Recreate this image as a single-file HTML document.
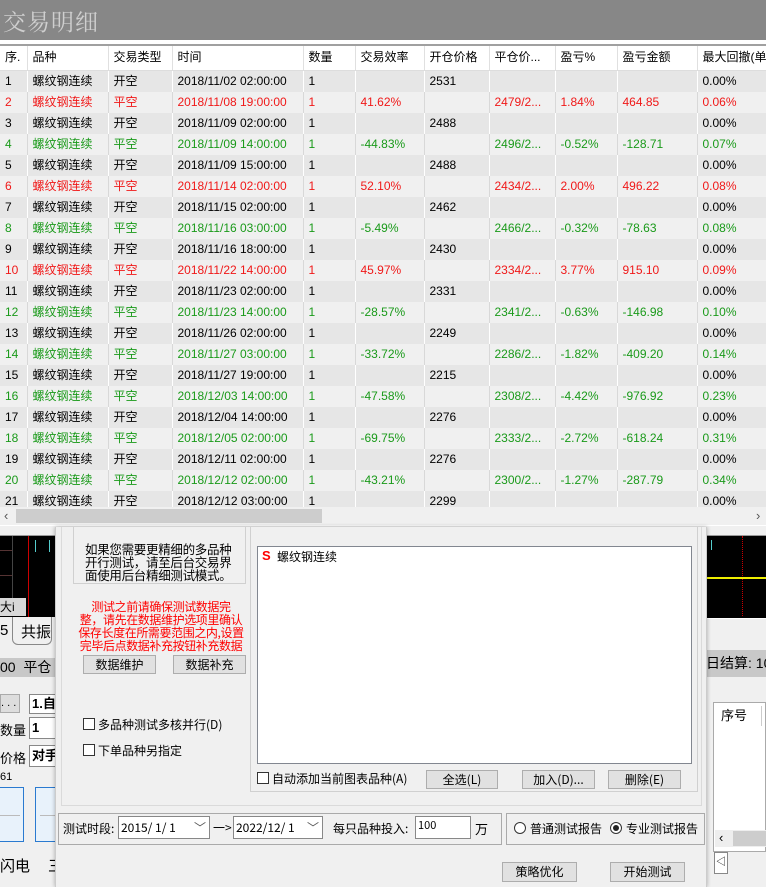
<!DOCTYPE html>
<html><head><meta charset="utf-8"><style>
*{margin:0;padding:0;box-sizing:border-box}
body{width:766px;height:887px;overflow:hidden;position:relative;background:#f0f0f0;font-family:"Liberation Sans","Noto Sans CJK SC",sans-serif;font-size:12px;color:#000}
.a{position:absolute}
#title{left:0;top:0;width:766px;height:40px;background:#878787}
#title span{position:absolute;left:3px;top:4px;font-size:23px;color:#cfcfcf;font-family:"Liberation Serif","Noto Serif CJK SC",serif;letter-spacing:1px}
table{border-collapse:collapse;table-layout:fixed;position:absolute;left:0;top:46px;width:766px}
td{height:21px;padding:0 0 0 5px;white-space:nowrap;overflow:hidden;border-right:1px solid #d8d8d8;font-size:12px;line-height:21px}
tr.h td{height:24px;background:#fff;border-right:1px solid #e0e0e0;border-bottom:1px solid #ddd}
tr.o td{background:#e6e6e6;border-right:1px solid #fff}
tr.r td{color:#f01818}
tr.g td{color:#1a9a1a}
.btn{position:absolute;background:#e1e1e1;border:1px solid #adadad;text-align:center;font-size:12px;line-height:17px}
.cb{position:absolute;width:12px;height:12px;border:1px solid #333;background:#fff}
.dlg{font-family:"WenQuanYi Zen Hei","Noto Sans CJK SC",sans-serif}
.nw{white-space:nowrap}
</style></head><body>
<div id="title" class="a"><span>交易明细</span></div>
<div class="a" style="left:0;top:40px;width:766px;height:6px;background:#fff;border-bottom:2px solid #a0a0a0"></div>
<table>
<colgroup><col style="width:27px"><col style="width:81px"><col style="width:64px"><col style="width:131px"><col style="width:52px"><col style="width:69px"><col style="width:65px"><col style="width:66px"><col style="width:62px"><col style="width:80px"><col style="width:69px"></colgroup>
<tr class="h"><td>序.</td><td>品种</td><td>交易类型</td><td>时间</td><td>数量</td><td>交易效率</td><td>开仓价格</td><td>平仓价...</td><td>盈亏%</td><td>盈亏金额</td><td>最大回撤(单</td></tr>
<tr class="o"><td>1</td><td>螺纹钢连续</td><td>开空</td><td>2018/11/02 02:00:00</td><td>1</td><td></td><td>2531</td><td></td><td></td><td></td><td>0.00%</td></tr>
<tr class="r"><td>2</td><td>螺纹钢连续</td><td>平空</td><td>2018/11/08 19:00:00</td><td>1</td><td>41.62%</td><td></td><td>2479/2...</td><td>1.84%</td><td>464.85</td><td>0.06%</td></tr>
<tr class="o"><td>3</td><td>螺纹钢连续</td><td>开空</td><td>2018/11/09 02:00:00</td><td>1</td><td></td><td>2488</td><td></td><td></td><td></td><td>0.00%</td></tr>
<tr class="g"><td>4</td><td>螺纹钢连续</td><td>平空</td><td>2018/11/09 14:00:00</td><td>1</td><td>-44.83%</td><td></td><td>2496/2...</td><td>-0.52%</td><td>-128.71</td><td>0.07%</td></tr>
<tr class="o"><td>5</td><td>螺纹钢连续</td><td>开空</td><td>2018/11/09 15:00:00</td><td>1</td><td></td><td>2488</td><td></td><td></td><td></td><td>0.00%</td></tr>
<tr class="r"><td>6</td><td>螺纹钢连续</td><td>平空</td><td>2018/11/14 02:00:00</td><td>1</td><td>52.10%</td><td></td><td>2434/2...</td><td>2.00%</td><td>496.22</td><td>0.08%</td></tr>
<tr class="o"><td>7</td><td>螺纹钢连续</td><td>开空</td><td>2018/11/15 02:00:00</td><td>1</td><td></td><td>2462</td><td></td><td></td><td></td><td>0.00%</td></tr>
<tr class="g"><td>8</td><td>螺纹钢连续</td><td>平空</td><td>2018/11/16 03:00:00</td><td>1</td><td>-5.49%</td><td></td><td>2466/2...</td><td>-0.32%</td><td>-78.63</td><td>0.08%</td></tr>
<tr class="o"><td>9</td><td>螺纹钢连续</td><td>开空</td><td>2018/11/16 18:00:00</td><td>1</td><td></td><td>2430</td><td></td><td></td><td></td><td>0.00%</td></tr>
<tr class="r"><td>10</td><td>螺纹钢连续</td><td>平空</td><td>2018/11/22 14:00:00</td><td>1</td><td>45.97%</td><td></td><td>2334/2...</td><td>3.77%</td><td>915.10</td><td>0.09%</td></tr>
<tr class="o"><td>11</td><td>螺纹钢连续</td><td>开空</td><td>2018/11/23 02:00:00</td><td>1</td><td></td><td>2331</td><td></td><td></td><td></td><td>0.00%</td></tr>
<tr class="g"><td>12</td><td>螺纹钢连续</td><td>平空</td><td>2018/11/23 14:00:00</td><td>1</td><td>-28.57%</td><td></td><td>2341/2...</td><td>-0.63%</td><td>-146.98</td><td>0.10%</td></tr>
<tr class="o"><td>13</td><td>螺纹钢连续</td><td>开空</td><td>2018/11/26 02:00:00</td><td>1</td><td></td><td>2249</td><td></td><td></td><td></td><td>0.00%</td></tr>
<tr class="g"><td>14</td><td>螺纹钢连续</td><td>平空</td><td>2018/11/27 03:00:00</td><td>1</td><td>-33.72%</td><td></td><td>2286/2...</td><td>-1.82%</td><td>-409.20</td><td>0.14%</td></tr>
<tr class="o"><td>15</td><td>螺纹钢连续</td><td>开空</td><td>2018/11/27 19:00:00</td><td>1</td><td></td><td>2215</td><td></td><td></td><td></td><td>0.00%</td></tr>
<tr class="g"><td>16</td><td>螺纹钢连续</td><td>平空</td><td>2018/12/03 14:00:00</td><td>1</td><td>-47.58%</td><td></td><td>2308/2...</td><td>-4.42%</td><td>-976.92</td><td>0.23%</td></tr>
<tr class="o"><td>17</td><td>螺纹钢连续</td><td>开空</td><td>2018/12/04 14:00:00</td><td>1</td><td></td><td>2276</td><td></td><td></td><td></td><td>0.00%</td></tr>
<tr class="g"><td>18</td><td>螺纹钢连续</td><td>平空</td><td>2018/12/05 02:00:00</td><td>1</td><td>-69.75%</td><td></td><td>2333/2...</td><td>-2.72%</td><td>-618.24</td><td>0.31%</td></tr>
<tr class="o"><td>19</td><td>螺纹钢连续</td><td>开空</td><td>2018/12/11 02:00:00</td><td>1</td><td></td><td>2276</td><td></td><td></td><td></td><td>0.00%</td></tr>
<tr class="g"><td>20</td><td>螺纹钢连续</td><td>平空</td><td>2018/12/12 02:00:00</td><td>1</td><td>-43.21%</td><td></td><td>2300/2...</td><td>-1.27%</td><td>-287.79</td><td>0.34%</td></tr>
<tr class="o"><td>21</td><td>螺纹钢连续</td><td>开空</td><td>2018/12/12 03:00:00</td><td>1</td><td></td><td>2299</td><td></td><td></td><td></td><td>0.00%</td></tr>
</table>
<div class="a" style="left:0;top:507px;width:766px;height:19px;background:#f0f0f0;border-bottom:1px solid #fff"></div>
<div class="a" style="left:4px;top:508px;font-size:13px;color:#555">&lsaquo;</div>
<div class="a" style="left:16px;top:509px;width:306px;height:14px;background:#cdcdcd"></div>
<div class="a" style="left:756px;top:508px;font-size:13px;color:#555">&rsaquo;</div>
<div class="a" style="left:0;top:526px;width:766px;height:10px;background:#f0f0f0;border-bottom:1px solid #999"></div>

<div class="a" style="left:0;top:536px;width:55px;height:81px;background:#000"></div>
<div class="a" style="left:0;top:550px;width:12px;height:1px;background:#553333"></div>
<div class="a" style="left:0;top:575px;width:12px;height:1px;background:#553333"></div>
<div class="a" style="left:12px;top:536px;width:1px;height:62px;background:#444"></div>
<div class="a" style="left:28px;top:536px;width:1px;height:81px;background:#c00"></div>
<div class="a" style="left:35px;top:540px;width:1px;height:12px;background:#5cc"></div>
<div class="a" style="left:49px;top:540px;width:1px;height:12px;background:#5cc"></div>
<div class="a" style="left:0;top:598px;width:26px;height:18px;background:#d8d8d8;font-size:12px;line-height:18px">大i</div>
<div class="a" style="left:0;top:617px;width:55px;height:28px;background:#f0f0f0;font-size:15px"><span style="position:absolute;left:0;top:5px">5</span><span style="position:absolute;left:12px;top:0;width:40px;height:28px;border:1px solid #888;border-top:none;border-radius:0 0 6px 6px;padding:4px 0 0 8px">共振</span></div>
<div class="a nw" style="left:0;top:658px;width:55px;height:19px;background:#c8c8c8;font-size:14px;line-height:19px;overflow:hidden">00 &nbsp;平仓</div>
<div class="a" style="left:0;top:694px;width:20px;height:19px;background:#ddd;border:1px solid #aaa;font-size:11px;line-height:17px">. . .</div>
<div class="a" style="left:29px;top:694px;width:30px;height:20px;background:#fff;border:1px solid #888;font-size:13px;font-weight:bold;padding-left:2px;line-height:18px">1.自</div>
<div class="a" style="left:0;top:720px;font-size:13px">数量</div>
<div class="a" style="left:29px;top:717px;width:30px;height:22px;background:#fff;border:1px solid #888;font-size:13px;font-weight:bold;padding-left:2px;line-height:20px">1</div>
<div class="a" style="left:0;top:748px;font-size:13px">价格</div>
<div class="a" style="left:29px;top:745px;width:30px;height:22px;background:#fff;border:1px solid #888;font-size:13px;font-weight:bold;padding-left:2px;line-height:20px">对手</div>
<div class="a" style="left:0;top:771px;font-size:11px">61</div>
<div class="a" style="left:0;top:787px;width:24px;height:55px;background:#e8f2fb;border:1px solid #2a7ad0;border-left:none"></div>
<div class="a" style="left:0;top:815px;width:20px;height:1px;background:#bbb"></div>
<div class="a" style="left:35px;top:787px;width:24px;height:55px;background:#e8f2fb;border:1px solid #2a7ad0"></div>
<div class="a" style="left:40px;top:815px;width:19px;height:1px;background:#bbb"></div>
<div class="a" style="left:0;top:852px;width:55px;height:27px;font-size:15px"><span style="position:absolute;left:0;top:3px">闪电</span><span style="position:absolute;left:48px;top:3px">三</span></div>

<div class="a" style="left:707px;top:536px;width:59px;height:83px;background:#000;border-bottom:1px solid #fff"></div>
<div class="a" style="left:742px;top:536px;width:1px;height:80px;border-left:1px dotted #c00"></div>
<div class="a" style="left:707px;top:577px;width:59px;height:2px;background:#ee0"></div>
<div class="a" style="left:711px;top:540px;width:1px;height:10px;background:#5cc"></div>
<div class="a nw" style="left:706px;top:650px;width:60px;height:27px;background:#c8c8c8;font-size:14px;line-height:27px;overflow:hidden">日结算: 10</div>
<div class="a" style="left:713px;top:702px;width:53px;height:150px;background:#fff;border:1px solid #aaa"></div>
<div class="a" style="left:717px;top:706px;width:45px;height:20px;border-right:1px solid #ccc;font-size:13px;padding-left:4px;line-height:20px">序号</div>
<div class="a" style="left:715px;top:830px;width:51px;height:17px;background:#eee"><span style="position:absolute;left:4px;top:0;font-size:13px">&lsaquo;</span><div style="position:absolute;left:18px;top:1px;width:33px;height:15px;background:#cdcdcd"></div></div>
<div class="a" style="left:714px;top:852px;width:14px;height:22px;border:1px solid #888;background:#fff;font-size:10px;line-height:20px;text-align:center">◁</div>

<div class="a dlg" style="left:55px;top:527px;width:652px;height:360px;background:#f0f0f0;border-left:1px solid #ccc;border-right:1px solid #ccc;box-shadow:0 0 4px rgba(0,0,0,.3)"></div>
<div class="dlg">
<div class="a" style="left:61px;top:527px;width:641px;height:279px;border:1px solid #dadada;border-top:none"></div>
<div class="a" style="left:73px;top:527px;width:173px;height:57px;border:1px solid #d0d0d0;border-top:none"></div>
<div class="a nw" style="left:85px;top:542px;font-size:12.5px;line-height:13px;letter-spacing:-0.3px">如果您需要更精细的多品种<br>开行测试，请至后台交易界<br>面使用后台精细测试模式。</div>
<div class="a nw" style="left:73px;top:600px;width:176px;font-size:12px;line-height:13px;color:#f00;text-align:center;letter-spacing:-0.4px">测试之前请确保测试数据完<br>整，请先在数据维护选项里确认<br>保存长度在所需要范围之内,设置<br>完毕后点数据补充按钮补充数据</div>
<div class="btn" style="left:83px;top:655px;width:73px;height:19px">数据维护</div>
<div class="btn" style="left:173px;top:655px;width:73px;height:19px">数据补充</div>
<div class="cb" style="left:83px;top:718px"></div><div class="a" style="left:98px;top:716px;font-size:12px">多品种测试多核并行(D)</div>
<div class="cb" style="left:83px;top:744px"></div><div class="a" style="left:98px;top:742px;font-size:12px">下单品种另指定</div>
<div class="a" style="left:250px;top:527px;width:448px;height:265px;border:1px solid #d0d0d0;border-top:none"></div>
<div class="a" style="left:257px;top:546px;width:435px;height:218px;background:#fff;border:1px solid #828790"></div>
<div class="a" style="left:262px;top:548px;font-size:13px;color:#f00;font-weight:bold;font-family:'Liberation Sans',sans-serif">S</div>
<div class="a" style="left:277px;top:548px;font-size:12px">螺纹钢连续</div>
<div class="cb" style="left:257px;top:772px"></div><div class="a" style="left:272px;top:770px;font-size:12px">自动添加当前图表品种(A)</div>
<div class="btn" style="left:426px;top:770px;width:72px;height:19px">全选(L)</div>
<div class="btn" style="left:522px;top:770px;width:73px;height:19px">加入(D)...</div>
<div class="btn" style="left:608px;top:770px;width:73px;height:19px">删除(E)</div>

<div class="a" style="left:58px;top:813px;width:444px;height:32px;border:1px solid #aaa"></div>
<div class="a" style="left:63px;top:820px;font-size:12px">测试时段:</div>
<div class="a" style="left:118px;top:816px;width:92px;height:23px;background:#fff;border:1px solid #888;font-size:12px;line-height:21px;padding-left:2px">2015/ 1/ 1<span style="position:absolute;right:3px;top:0;color:#555">﹀</span></div>
<div class="a" style="left:213px;top:819px;font-size:12px">一&gt;</div>
<div class="a" style="left:233px;top:816px;width:90px;height:23px;background:#fff;border:1px solid #888;font-size:12px;line-height:21px;padding-left:2px">2022/12/ 1<span style="position:absolute;right:3px;top:0;color:#555">﹀</span></div>
<div class="a" style="left:333px;top:820px;font-size:12px">每只品种投入:</div>
<div class="a" style="left:415px;top:816px;width:56px;height:23px;background:#fff;border:1px solid #888;font-size:11px;padding-left:2px">100</div>
<div class="a" style="left:475px;top:819px;font-size:13px">万</div>
<div class="a" style="left:506px;top:813px;width:199px;height:32px;border:1px solid #aaa"></div>
<div class="a" style="left:514px;top:822px;width:12px;height:12px;border:1px solid #333;border-radius:50%;background:#fff"></div>
<div class="a" style="left:530px;top:820px;font-size:12px">普通测试报告</div>
<div class="a" style="left:610px;top:822px;width:12px;height:12px;border:1px solid #333;border-radius:50%;background:#fff"><div style="position:absolute;left:2px;top:2px;width:6px;height:6px;border-radius:50%;background:#222"></div></div>
<div class="a" style="left:626px;top:820px;font-size:12px">专业测试报告</div>
<div class="btn" style="left:502px;top:862px;width:75px;height:20px">策略优化</div>
<div class="btn" style="left:610px;top:862px;width:75px;height:20px">开始测试</div>
</div>
</body></html>
